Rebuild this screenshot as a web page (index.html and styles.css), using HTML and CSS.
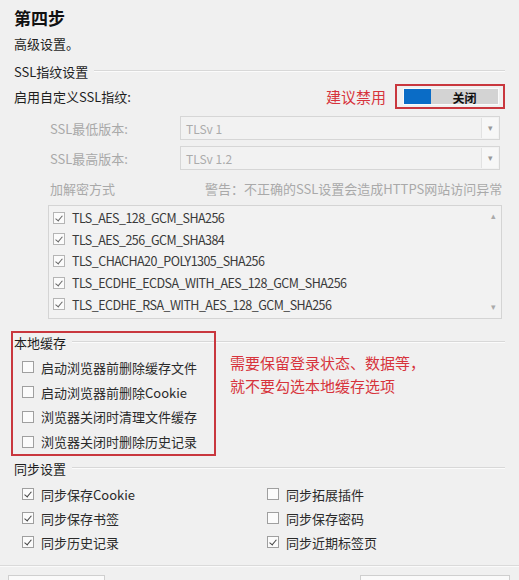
FILE: index.html
```html
<!DOCTYPE html>
<html lang="zh-CN">
<head>
<meta charset="utf-8">
<title>第四步</title>
<link rel="stylesheet" href="styles.css">
</head>
<body>
<div class="page">
  <h1 class="title">第四步</h1>
  <div class="desc">高级设置。</div>

  <div class="group-head"><span>SSL指纹设置</span><i></i></div>
  <div class="enable-row">
    <span>启用自定义SSL指纹:</span>
    <div class="enable-right">
      <span class="note">建议禁用</span>
      <div class="toggle-mark">
        <div class="toggle"><span class="knob"></span><span class="toggle-text">关闭</span></div>
      </div>
    </div>
  </div>

  <div class="field-row first">
    <span class="field-label">SSL最低版本:</span>
    <div class="select"><span>TLSv 1</span><span class="arrow">▾</span></div>
  </div>
  <div class="field-row">
    <span class="field-label">SSL最高版本:</span>
    <div class="select"><span>TLSv 1.2</span><span class="arrow">▾</span></div>
  </div>
  <div class="cipher-row">
    <span class="field-label">加解密方式</span>
    <span class="warn">警告：不正确的SSL设置会造成HTTPS网站访问异常</span>
  </div>

  <div class="listbox">
    <ul class="list">
      <li><span class="cb checked dis"></span>TLS_AES_128_GCM_SHA256</li>
      <li><span class="cb checked dis"></span>TLS_AES_256_GCM_SHA384</li>
      <li><span class="cb checked dis"></span>TLS_CHACHA20_POLY1305_SHA256</li>
      <li><span class="cb checked dis"></span>TLS_ECDHE_ECDSA_WITH_AES_128_GCM_SHA256</li>
      <li><span class="cb checked dis"></span>TLS_ECDHE_RSA_WITH_AES_128_GCM_SHA256</li>
    </ul>
    <div class="scroll"><span>▴</span><span>▾</span></div>
  </div>

  <section class="cache">
    <div class="group-head"><span>本地缓存</span><i></i></div>
    <ul class="cache-list">
      <li><span class="cb"></span>启动浏览器前删除缓存文件</li>
      <li><span class="cb"></span>启动浏览器前删除Cookie</li>
      <li><span class="cb"></span>浏览器关闭时清理文件缓存</li>
      <li><span class="cb"></span>浏览器关闭时删除历史记录</li>
    </ul>
    <div class="red-box"></div>
    <p class="cache-note">需要保留登录状态、数据等，<br>就不要勾选本地缓存选项</p>
  </section>

  <div class="group-head sync-head"><span>同步设置</span><i></i></div>
  <ul class="sync-grid">
    <li><span class="cb checked"></span>同步保存Cookie</li>
    <li><span class="cb"></span>同步拓展插件</li>
    <li><span class="cb checked"></span>同步保存书签</li>
    <li><span class="cb"></span>同步保存密码</li>
    <li><span class="cb checked"></span>同步历史记录</li>
    <li><span class="cb checked"></span>同步近期标签页</li>
  </ul>
</div>
<footer class="footer">
  <div class="btn left"></div>
  <div class="btn right"></div>
</footer>
</body>
</html>
```

FILE: styles.css
```css
* { box-sizing: border-box; }
html, body { margin: 0; padding: 0; }
body {
  background: #f0f0f0;
  font-family: "Noto Sans CJK SC", "Noto Sans", sans-serif;
  font-size: 13px;
  color: #1e1e1e;
  width: 519px;
  height: 580px;
  overflow: hidden;
}
ul { list-style: none; margin: 0; padding: 0; }
.page { padding: 0 14px 0 14px; }

.title {
  margin: 6px 0 0 0;
  height: 24px;
  line-height: 24px;
  font-size: 17px;
  font-weight: bold;
  color: #111;
}
.desc { margin-top: 4px; height: 20px; line-height: 20px; }

.group-head {
  display: flex;
  align-items: center;
  height: 20px;
  margin-top: 7px;
  gap: 6px;
}
.group-head i {
  flex: 1;
  height: 2px;
  border-top: 1px solid #d8d8d8;
  border-bottom: 1px solid #fbfbfb;
}

.enable-row {
  display: flex;
  align-items: center;
  justify-content: space-between;
  height: 24px;
  margin-top: 3px;
}
.enable-right { display: flex; align-items: center; gap: 9px; }
.note { color: #d7343c; font-size: 15px; }
.toggle-mark {
  width: 110px;
  height: 25px;
  border: 2px solid #c9373e;
  padding: 2px 4px 2px 6px;
}
.toggle {
  display: flex;
  height: 100%;
  background: #d3d3d3;
  border: 1px solid #fafafa;
}
.knob { width: 27px; background: #0a6cc6; }
.toggle-text {
  flex: 1;
  text-align: center;
  line-height: 17px;
  font-size: 12px;
  font-weight: bold;
  color: #111;
}

.field-row {
  display: flex;
  align-items: center;
  height: 24px;
  margin-top: 6px;
  padding-left: 36px;
}
.field-row.first { margin-top: 8px; }
.field-label { width: 130px; color: #a9a9a9; }
.select {
  flex: 1;
  height: 24px;
  margin-right: 5px;
  border: 1px solid #d6d6d6;
  background: #f2f2f2;
  display: flex;
  align-items: center;
  justify-content: space-between;
  padding-left: 5px;
  color: #ababab;
  font-size: 12px;
}
.arrow {
  width: 17px;
  height: 20px;
  margin-right: 1px;
  border-left: 1px solid #e2e2e2;
  background: #f7f7f7;
  text-align: center;
  font-size: 9px;
  line-height: 20px;
  color: #999;
}

.cipher-row {
  display: flex;
  align-items: center;
  height: 20px;
  margin-top: 8px;
  padding-left: 36px;
}
.cipher-row .field-label { width: 155px; }
.warn { color: #a9a9a9; font-size: 13px; white-space: nowrap; }

.listbox {
  display: flex;
  margin: 7px 3px 0 34px;
  height: 114px;
  border: 1px solid #d4d4d4;
  background: #f2f2f2;
}
.list { flex: 1; padding: 1px 0 0 4px; }
.list li {
  display: flex;
  align-items: center;
  gap: 7px;
  height: 21.6px;
  font-size: 12.5px;
  letter-spacing: -0.55px;
  color: #3a3a3a;
}
.scroll {
  width: 16px;
  display: flex;
  flex-direction: column;
  justify-content: space-between;
  align-items: center;
  padding: 3px 0 5px;
  color: #aaa;
  font-size: 9px;
}

.cb {
  width: 12px;
  height: 12px;
  flex: none;
  border: 1px solid #9f9f9f;
  background: #fbfbfb;
  position: relative;
}
.cb.dis { border-color: #b5b5b5; }
.cb.checked::after {
  content: "";
  position: absolute;
  left: 3px;
  top: 1px;
  width: 3px;
  height: 6px;
  border: solid #444;
  border-width: 0 1.5px 1.5px 0;
  transform: rotate(40deg);
}
.cb.dis.checked::after { border-color: #666; }

.cache { position: relative; margin-top: 13px; }
.cache .group-head { margin-top: 0; }
.cache-list { margin-top: 3px; padding-left: 8px; }
.cache-list li, .sync-grid li {
  display: flex;
  align-items: center;
  gap: 7px;
  height: 24.8px;
  color: #2a2a2a;
}
.red-box {
  position: absolute;
  left: -3px;
  top: -1px;
  width: 205px;
  height: 125px;
  border: 2px solid #c9373e;
}
.cache-note {
  position: absolute;
  left: 216px;
  top: 19px;
  margin: 0;
  color: #d7343c;
  font-size: 15px;
  line-height: 23px;
}

.sync-head { margin-top: 4px; }
.sync-grid {
  display: grid;
  grid-template-columns: 245px 1fr;
  margin-top: 4px;
  padding-left: 8px;
}
.sync-grid li { height: 24px; }

.footer {
  margin-top: 11px;
  border-top: 1px solid #dadada;
  box-shadow: inset 0 1px 0 #fafafa;
  height: 20px;
  position: relative;
  padding-top: 9px;
  display: flex;
  justify-content: space-between;
}
.btn {
  height: 20px;
  border: 1px solid #cfcfcf;
  background: #fafafa;
}
.btn.left { width: 97px; margin-left: 8px; }
.btn.right { width: 150px; margin-right: 9px; }
```
